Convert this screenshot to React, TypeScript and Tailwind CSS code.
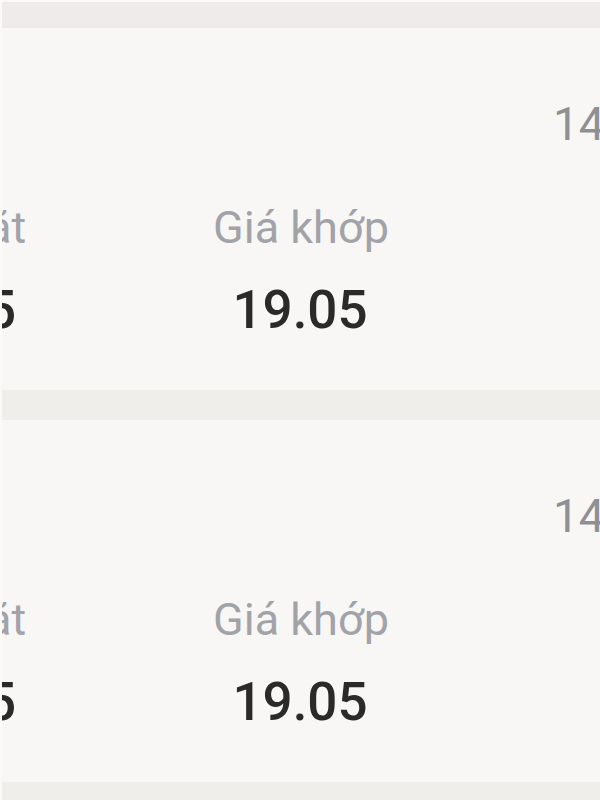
import React from "react";

const font = { fontFamily: "Roboto, 'Noto Sans', sans-serif" };

function Card({ time }: { time: string }) {
  return (
    <div className="h-[362px] shrink-0 overflow-hidden bg-[#f8f7f5] pt-[73px]">
      <div className="whitespace-nowrap pl-[551px] text-[46px] leading-[46px] text-[#8e9094]">{time}</div>
      <div className="mt-[58px] ml-[-220px] flex">
        <div className="flex w-[345px] shrink-0 flex-col items-center">
          <div className="whitespace-nowrap text-[45px] leading-[45px] font-normal text-[#a1a3a8]">Giá đặt</div>
          <div className="mt-[34px] mr-[12px] whitespace-nowrap text-[53px] leading-[53px] font-medium text-[#2a2a2a]">19.05</div>
        </div>
        <div className="flex w-[350px] shrink-0 flex-col items-center">
          <div className="mr-[2px] whitespace-nowrap text-[45px] leading-[45px] font-normal text-[#a1a3a8]">Giá khớp</div>
          <div className="mt-[34px] mr-[4px] whitespace-nowrap text-[53px] leading-[53px] font-medium text-[#2a2a2a]">19.05</div>
        </div>
      </div>
    </div>
  );
}

export default function App() {
  return (
    <div style={font} className="flex h-[800px] w-[600px] flex-col overflow-hidden border-l-2 border-t-2 border-[#fbfaf9] bg-[#f0eeeb]">
      <div className="h-[26px] shrink-0 bg-[#efebea]" />
      <Card time="14:05:12" />
      <div className="h-[30px] shrink-0 bg-[#f0eeeb]" />
      <Card time="14:05:12" />
    </div>
  );
}
